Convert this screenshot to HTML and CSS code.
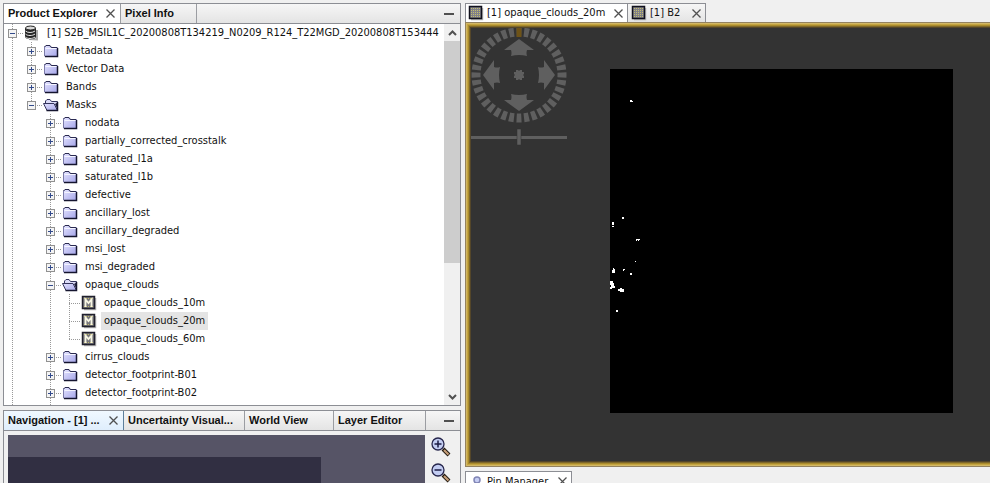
FILE: index.html
```html
<!DOCTYPE html>
<html lang="en">
<head>
<meta charset="utf-8">
<title>Product Explorer</title>
<link rel="stylesheet" href="styles.css">
</head>
<body>
<svg class="defs" aria-hidden="true">
  <defs>
    <linearGradient id="lilac" x1="0" y1="0" x2="1" y2="1">
      <stop offset="0" stop-color="#e4e4ff"/><stop offset="1" stop-color="#a4a4e8"/>
    </linearGradient>
    <symbol id="folder" viewBox="0 0 16 16">
      <path d="M1.500 13V4L3 2.500H6.500L8 4.500H14.500V13.500H2Z" fill="url(#lilac)" stroke="#7a7aa8"/>
      <path d="M1.500 4L3 2.500H7L8.500 4.500H14" fill="none" stroke="#2a2a50"/>
      <path d="M14.500 5V13.500H2" fill="none" stroke="#15152f" stroke-width="1.500"/>
      <path d="M2.500 5.500H13.500" stroke="#f4f4ff"/>
    </symbol>
    <symbol id="folder-open" viewBox="0 0 16 16">
      <path d="M2.500 6V4L4 2.500H7L8.500 4.500H14.500V13.500" fill="#dcdcf8" stroke="#33335c"/>
      <path d="M.5 6.500H11L14.500 13.500H4Z" fill="url(#lilac)" stroke="#34345c"/>
      <path d="M12 7L14.500 12V5.500Z" fill="#20203c"/>
      <path d="M3.500 13.500H14.500V5" fill="none" stroke="#15152f" stroke-width="1.500"/>
    </symbol>
    <symbol id="mask" viewBox="0 0 16 16">
      <path d="M3 14.500H14.500V3" fill="none" stroke="#b4b4b4" stroke-width="1.500"/>
      <rect x="1.500" y="1.500" width="12" height="12" fill="#77777c" stroke="#20202c" stroke-width="1.500"/>
      <path d="M3 3.500h9M3 11.500h9" stroke="#c5bd69" stroke-dasharray="1 1"/>
      <path d="M4.500 12V4.500L7.500 8L10.500 4.500V12" fill="none" stroke="#f7f6e4" stroke-width="1.800"/>
    </symbol>
    <symbol id="raster" viewBox="0 0 16 16">
      <path d="M3 14.500H14.500V3" fill="none" stroke="#b8b8b8" stroke-width="1.500"/>
      <rect x="1.500" y="1.500" width="12" height="12" fill="#808088" stroke="#10101c" stroke-width="1.500"/>
      <path d="M3 3.500h9M3 5.500h9M3 7.500h9M3 9.500h9M3 11.500h9" stroke="#c4bd70" stroke-dasharray="1 1"/>
    </symbol>
    <symbol id="database" viewBox="0 0 16 16">
      <path d="M5 14l8 .5V5" fill="none" stroke="#aaa" stroke-width="2"/>
      <path d="M1 3v9c1 3 10 3 11 0V3z" fill="#262626"/>
      <ellipse cx="6.500" cy="3" rx="5" ry="2" fill="#d8d8d8" stroke="#222"/>
      <path d="M1.500 6c2 2 7 2 9.500 0M1.500 9c2 2 7 2 9.500 0M1.500 12c2 2 7 2 9.500 0" fill="none" stroke="#e8e8e8"/>
    </symbol>
    <symbol id="close" viewBox="0 0 9 9">
      <path d="M.5 .5L8.500 8.500M8.500 .5L.5 8.500" stroke="#505050" stroke-width="1.300"/>
    </symbol>
    <symbol id="lens" viewBox="0 0 20 20">
      <path d="M12 12L18 18" stroke="#20180f" stroke-width="4"/>
      <path d="M13 13L17.500 17.500" stroke="#c59e78" stroke-width="2.200"/>
      <circle cx="7" cy="7" r="6" fill="#c3cdf2" stroke="#26264c" stroke-width="1.300"/>
    </symbol>
  </defs>
</svg>

<main class="workspace">
  <div class="side">
    <section class="panel explorer">
      <header class="bar">
        <div class="tab current"><button>Product Explorer</button><button aria-label="Close"><svg class="x"><use href="#close"/></svg></button></div>
        <div class="tab info"><button>Pixel Info</button></div>
        <button class="minimize" aria-label="Minimize"></button>
      </header>
      <div class="tree-view">
        <ul class="tree root">
          <li>
            <div class="row"><button class="toggle" aria-label="Collapse"></button><svg class="icon"><use href="#database"/></svg><span>[1] S2B_MSIL1C_20200808T134219_N0209_R124_T22MGD_20200808T153444</span></div>
            <ul class="tree">
              <li><div class="row"><button class="toggle plus" aria-label="Expand"></button><svg class="icon"><use href="#folder"/></svg><span>Metadata</span></div></li>
              <li><div class="row"><button class="toggle plus" aria-label="Expand"></button><svg class="icon"><use href="#folder"/></svg><span>Vector Data</span></div></li>
              <li><div class="row"><button class="toggle plus" aria-label="Expand"></button><svg class="icon"><use href="#folder"/></svg><span>Bands</span></div></li>
              <li>
                <div class="row"><button class="toggle" aria-label="Collapse"></button><svg class="icon"><use href="#folder-open"/></svg><span>Masks</span></div>
                <ul class="tree">
                  <li><div class="row"><button class="toggle plus" aria-label="Expand"></button><svg class="icon"><use href="#folder"/></svg><span>nodata</span></div></li>
                  <li><div class="row"><button class="toggle plus" aria-label="Expand"></button><svg class="icon"><use href="#folder"/></svg><span>partially_corrected_crosstalk</span></div></li>
                  <li><div class="row"><button class="toggle plus" aria-label="Expand"></button><svg class="icon"><use href="#folder"/></svg><span>saturated_l1a</span></div></li>
                  <li><div class="row"><button class="toggle plus" aria-label="Expand"></button><svg class="icon"><use href="#folder"/></svg><span>saturated_l1b</span></div></li>
                  <li><div class="row"><button class="toggle plus" aria-label="Expand"></button><svg class="icon"><use href="#folder"/></svg><span>defective</span></div></li>
                  <li><div class="row"><button class="toggle plus" aria-label="Expand"></button><svg class="icon"><use href="#folder"/></svg><span>ancillary_lost</span></div></li>
                  <li><div class="row"><button class="toggle plus" aria-label="Expand"></button><svg class="icon"><use href="#folder"/></svg><span>ancillary_degraded</span></div></li>
                  <li><div class="row"><button class="toggle plus" aria-label="Expand"></button><svg class="icon"><use href="#folder"/></svg><span>msi_lost</span></div></li>
                  <li><div class="row"><button class="toggle plus" aria-label="Expand"></button><svg class="icon"><use href="#folder"/></svg><span>msi_degraded</span></div></li>
                  <li>
                    <div class="row"><button class="toggle" aria-label="Collapse"></button><svg class="icon"><use href="#folder-open"/></svg><span>opaque_clouds</span></div>
                    <ul class="tree">
                      <li><div class="row leaf"><svg class="icon"><use href="#mask"/></svg><span>opaque_clouds_10m</span></div></li>
                      <li><div class="row leaf"><svg class="icon"><use href="#mask"/></svg><span class="selected">opaque_clouds_20m</span></div></li>
                      <li><div class="row leaf"><svg class="icon"><use href="#mask"/></svg><span>opaque_clouds_60m</span></div></li>
                    </ul>
                  </li>
                  <li><div class="row"><button class="toggle plus" aria-label="Expand"></button><svg class="icon"><use href="#folder"/></svg><span>cirrus_clouds</span></div></li>
                  <li><div class="row"><button class="toggle plus" aria-label="Expand"></button><svg class="icon"><use href="#folder"/></svg><span>detector_footprint-B01</span></div></li>
                  <li><div class="row"><button class="toggle plus" aria-label="Expand"></button><svg class="icon"><use href="#folder"/></svg><span>detector_footprint-B02</span></div></li>
                  <li><div class="row"><button class="toggle plus" aria-label="Expand"></button><svg class="icon"><use href="#folder"/></svg></div></li>
                </ul>
              </li>
            </ul>
          </li>
        </ul>
        <div class="scrollbar">
          <button aria-label="Scroll up"><svg viewBox="0 0 9 6"><path d="M1 5L4.500 1.500L8 5" fill="none" stroke="#505050" stroke-width="2"/></svg></button>
          <div class="track"><div class="thumb"></div></div>
          <button aria-label="Scroll down"><svg viewBox="0 0 9 6"><path d="M1 1L4.500 4.500L8 1" fill="none" stroke="#505050" stroke-width="2"/></svg></button>
        </div>
      </div>
    </section>

    <section class="panel navigation">
      <header class="bar">
        <div class="tab focused"><button>Navigation - [1] ...</button><button aria-label="Close"><svg class="x"><use href="#close"/></svg></button></div>
        <div class="tab uncertainty"><button>Uncertainty Visual...</button></div>
        <div class="tab world"><button>World View</button></div>
        <div class="tab layer"><button>Layer Editor</button></div>
        <button class="minimize" aria-label="Minimize"></button>
      </header>
      <div class="overview">
        <div class="map"><div class="extent"></div></div>
        <div class="tools">
          <button aria-label="Zoom in"><svg viewBox="0 0 20 20"><use href="#lens"/><path d="M3.500 7H10.500M7 3.500V10.500" stroke="#1c1c44" stroke-width="1.500"/></svg></button>
          <button aria-label="Zoom out"><svg viewBox="0 0 20 20"><use href="#lens"/><path d="M3.500 7H10.500" stroke="#1c1c44" stroke-width="1.500"/></svg></button>
        </div>
      </div>
    </section>
  </div>

  <div class="content">
    <section class="editor">
      <header class="documents">
        <div class="doc open"><svg class="icon"><use href="#raster"/></svg><button>[1] opaque_clouds_20m</button><button aria-label="Close"><svg class="x"><use href="#close"/></svg></button></div>
        <div class="doc second"><svg class="icon"><use href="#raster"/></svg><button>[1] B2</button><button aria-label="Close"><svg class="x"><use href="#close"/></svg></button></div>
      </header>
      <div class="frame">
        <div class="view">
          <svg class="compass" viewBox="0 0 97 120" width="97" height="120">
            <g fill="#5f5f5f">
              <circle cx="48" cy="47" r="43" fill="none" stroke="#5f5f5f" stroke-width="9" pathLength="720" stroke-dasharray="13 7" stroke-dashoffset="6.500"/>
              <path id="arrow" d="M48 11L63 22H56Q55 25 56 28Q48 26 40 28Q41 25 40 22H33Z"/>
              <use href="#arrow" transform="rotate(90 48 47)"/>
              <use href="#arrow" transform="rotate(180 48 47)"/>
              <use href="#arrow" transform="rotate(270 48 47)"/>
              <path d="M45 42h2l1 1 1-1h2v2h2v2l-1 1 1 1v2h-2v2h-2l-1-1-1 1h-2v-2h-2v-2l1-1-1-1v-2h2z"/>
              <path d="M0 108h96v3H0z"/>
              <path d="M46 101h4v16h-4z" stroke="#333" stroke-width=".5"/>
            </g>
            <path d="M45.500 0h5v9h-5z" fill="#6e5317"/>
          </svg>
          <svg class="product" viewBox="0 0 343 344" width="343" height="344">
            <path d="M0 0H343V344H0z" fill="#000"/>
            <path fill="#fff" d="M20 31h2v1h1v1h-3zM12 148h2v2h-2zM2 153h2v3h-2zM2 157h2v1h-2zM26 170h4v1h-1v1h-1v-1h-1v1h-1zM25 192h1v1h-1zM3 199h1v1h1v4h-3v-3h1zM13 200h2v1h-1v1h-1zM20 204h2v2h-2zM0 212h3v2h1v3h1v2H2v1H0v-2h1v-2H0zM10 219h2v1h2v3h-4v-1H8v-2h2zM6 241h2v2h-2z"/>
          </svg>
        </div>
      </div>
    </section>
    <section class="pins">
      <div class="doc"><svg class="icon" viewBox="0 0 16 16"><path d="M7 9L3 14" stroke="#777" stroke-width="1.500"/><circle cx="9" cy="6" r="3" fill="#c6cdf3" stroke="#8085b5" stroke-width="1.500"/></svg><button>Pin Manager</button><button aria-label="Close"><svg class="x"><use href="#close"/></svg></button></div>
    </section>
  </div>
</main>
</body>
</html>
```
FILE: styles.css
```css
* { box-sizing: border-box; }
body {
  margin: 0;
  background: #f0f0f0;
  color: #111;
  font: 11px/18px "DejaVu Sans Condensed", "DejaVu Sans", sans-serif;
  overflow: hidden;
}
button { border: 0; padding: 0; background: none; color: inherit; font: inherit; display: block; white-space: nowrap; }
svg { display: block; flex: none; }
.defs { position: absolute; width: 0; height: 0; }
.workspace {
  height: 100vh;
  padding: 3px 0 0 3px;
  display: grid;
  grid-template-columns: 458fr 525fr;
  grid-template-rows: minmax(0, 1fr);
  gap: 4px;
}
.side, .content { display: flex; flex-direction: column; min-width: 0; min-height: 0; }
.side { gap: 4px; }
.content { gap: 4px; }
.panel { border: 1px solid #8c8e94; display: flex; flex-direction: column; overflow: hidden; }
.explorer { flex: 1; min-height: 0; background: #fff; }
.navigation { flex: 0 0 73px; border-bottom: 0; }

.bar {
  flex: none;
  display: flex;
  height: 20px;
  border-bottom: 1px solid #8c8e94;
  background: linear-gradient(#f6f6f6, #e4e4e4);
  font: bold 11px/19px "Liberation Sans", Arial, sans-serif;
}
.tab { display: flex; align-items: center; justify-content: space-between; padding: 0 5px 0 4px; border-right: 1px solid #9b9da2; }
.current { width: 117px; background: #fff; }
.info { width: 76px; }
.focused { width: 120px; background: linear-gradient(#f0f8ff, #dfeefc); border-color: #5d7f9c; }
.uncertainty { width: 121px; }
.world { width: 89px; }
.layer { width: 92px; }
.x { width: 9px; height: 9px; }
.minimize { width: 10px; height: 2px; background: #505050; margin: 9px 6px 0 auto; }

.tree-view { flex: 1; min-height: 0; display: flex; overflow: hidden; }
.tree { list-style: none; margin: 0; padding: 0 0 0 19px; }
.root { flex: 1; min-width: 0; padding-left: 4px; }
.tree li {
  background: repeating-linear-gradient(#999 0 1px, transparent 1px 2px) 4px 0 / 1px 100% no-repeat;
}
.tree .tree > li:last-child { background-size: 1px 9px; }
.row {
  display: flex;
  align-items: center;
  height: 18px;
  white-space: nowrap;
  background: repeating-linear-gradient(90deg, #999 0 1px, transparent 1px 2px) 4px 9px / 12px 1px no-repeat;
}
.row .icon { margin: 0 4px 0 7px; }
.leaf .icon { margin-left: 16px; }
.row span { padding: 0 3px; }
.icon { width: 16px; height: 16px; }
.selected { background: #e4e4e4; }
.toggle {
  flex: none;
  width: 9px;
  height: 9px;
  border: 1px solid #919191;
  background: linear-gradient(#334b8c, #334b8c) center / 5px 1px no-repeat, #f4f4f4;
}
.plus { background: linear-gradient(#334b8c, #334b8c) center / 5px 1px no-repeat, linear-gradient(#334b8c, #334b8c) center / 1px 5px no-repeat, #f4f4f4; }

.scrollbar { width: 16px; display: flex; flex-direction: column; background: #f0f0f0; }
.scrollbar button { height: 17px; display: grid; place-items: center; }
.scrollbar svg { width: 9px; height: 6px; }
.track { flex: 1; }
.thumb { height: 64%; background: #cdcdcd; }

.overview { flex: 1; display: flex; padding: 4px 0 0 4px; }
.map { flex: 1; background: #565466; padding-top: 22px; }
.extent { width: 75%; height: 100%; background: #312f42; }
.tools { width: 35px; padding: 2px 0 0 6px; display: flex; flex-direction: column; gap: 6px; }
.tools svg { width: 20px; height: 20px; }

.documents { display: flex; height: 19px; }
.doc { display: flex; align-items: center; border: 1px solid #8c8e94; border-bottom: 0; padding: 0 4px 0 2px; background: linear-gradient(#f6f6f6, #e4e4e4); }
.doc .icon { margin-right: 3px; }
.doc .x { width: 9px; }
.doc button:last-child { margin-left: auto; }
.open { width: 163px; background: #fff; }
.second { width: 78px; border-left: 0; padding-left: 3px; }
.editor { flex: 1; min-height: 0; display: flex; flex-direction: column; margin-right: -8px; }
.frame {
  flex: 1;
  min-height: 0;
  padding: 5px;
  border: 1px solid #93825f;
  background: #333;
  box-shadow: inset 0 0 0 1px #d2b866, inset 0 0 0 2px #c4a440, inset 0 0 0 3px #a98b2c, inset 0 0 0 4px #80692c, inset 0 0 0 5px #544629;
}
.view { position: relative; height: 100%; background: #333; overflow: hidden; }
.compass { position: absolute; left: 0; top: 0; }
.product { position: absolute; left: 139px; top: 41px; }
.pins { flex: 0 0 12px; overflow: hidden; }
.pins .doc { width: 107px; height: 20px; background: #fff; }
```
